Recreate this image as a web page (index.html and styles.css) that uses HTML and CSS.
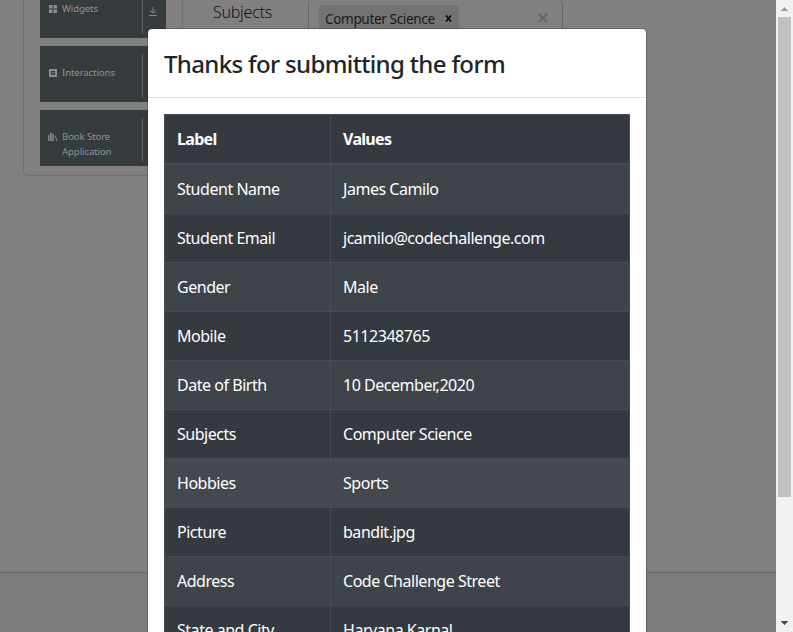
FILE: index.html
```html
<!DOCTYPE html>
<html lang="en">
<head>
<meta charset="utf-8">
<title>Student form</title>
<link rel="stylesheet" href="styles.css">
</head>
<body>
<div class="window">
  <div class="page">
    <div class="content">
      <aside class="sidebar">
        <div class="group">
          <svg class="icon" viewBox="0 0 8 8"><path d="M0 0h3.5v3.5H0zM4.5 0H8v3.5H4.5zM0 4.5h3.5V8H0zM4.5 4.5H8V8H4.5z"/></svg>
          <span class="name">Widgets</span>
          <span class="toggle"><svg viewBox="0 0 8 9"><path d="M4 0v6M1.2 3.5 4 6.2l2.8-2.7M0 8.5h8"/></svg></span>
        </div>
        <div class="group">
          <svg class="icon" viewBox="0 0 8 8"><path fill-rule="evenodd" d="M0 0h8v8H0zM2 2v4h4V2zM3 3h2v.7H3zM3 4.4h2v.7H3z"/></svg>
          <span class="name">Interactions</span>
          <span class="toggle"></span>
        </div>
        <div class="group">
          <svg class="icon book" viewBox="0 0 10 8"><path d="M0 2h1.6v6H0zM2 0h2v8H2zM4.3 1h1.7v7H4.3zM6.5 3l1-.4L9.6 7.6l-1 .4z"/></svg>
          <span class="name">Book Store<br>Application</span>
          <span class="toggle"></span>
        </div>
      </aside>
      <main class="form">
        <span class="label">Subjects</span>
        <div class="select">
          <div class="chip"><span>Computer Science</span><svg viewBox="0 0 7 7"><path d="m1 .5 5 6M6 .5l-5 6"/></svg></div>
          <svg class="clear" viewBox="0 0 10 10"><path d="m1 1 8 8M9 1 1 9"/></svg>
        </div>
      </main>
    </div>
    <footer class="footer"></footer>
  </div>
  <div class="scrollbar">
    <svg class="up" viewBox="0 0 7 4"><path d="M3 0h1v1h1v1h1v1h1v1H0V3h1V2h1V1h1z"/></svg>
    <div class="thumb"></div>
    <svg class="down" viewBox="0 0 7 4"><path d="M0 0h7v1H6v1H5v1H4v1H3V3H2V2H1V1H0z"/></svg>
  </div>
  <section class="modal">
    <header class="head"><h1>Thanks for submitting the form</h1></header>
    <div class="body">
      <table>
        <thead><tr><th>Label</th><th>Values</th></tr></thead>
        <tbody>
          <tr><td>Student Name</td><td>James Camilo</td></tr>
          <tr><td>Student Email</td><td>jcamilo@codechallenge.com</td></tr>
          <tr><td>Gender</td><td>Male</td></tr>
          <tr><td>Mobile</td><td>5112348765</td></tr>
          <tr><td>Date of Birth</td><td>10 December,2020</td></tr>
          <tr><td>Subjects</td><td>Computer Science</td></tr>
          <tr class="hover"><td>Hobbies</td><td>Sports</td></tr>
          <tr><td>Picture</td><td>bandit.jpg</td></tr>
          <tr><td>Address</td><td>Code Challenge Street</td></tr>
          <tr><td>State and City</td><td>Haryana Karnal</td></tr>
        </tbody>
      </table>
    </div>
  </section>
</div>
</body>
</html>
```
FILE: styles.css
```css
* { box-sizing: border-box; }
body { margin: 0; font-family: "Noto Sans", "Open Sans", sans-serif; }
.window { position: relative; display: flex; width: 793px; height: 632px; overflow: hidden; }
.page { flex: 1; min-width: 0; display: flex; flex-direction: column; background: #808080; }
.content { flex: 1; display: flex; align-items: flex-start; padding-left: 23px; }
.sidebar {
  width: 159px; height: 176px; padding: 0 0 0 16px; flex: none;
  display: flex; flex-direction: column; gap: 8px;
  border: 1px solid #707070; border-width: 0 0 1px 1px; border-radius: 0 0 0 5px;
}
.group {
  display: flex; width: 126px; height: 56px; flex: none; padding: 8px 0 4px 9px;
  background: #363b3e; color: #8f9293; font-size: 9.6px; line-height: 15px; letter-spacing: -0.1px;
}
.group:first-child { height: 38px; padding-top: 0; }
.icon { width: 8px; height: 8px; margin: 15px 5px 0 0; fill: #8c8e8f; flex: none; }
.group:first-child .icon { margin-top: 5px; }
.icon.book { width: 10px; margin: 15px 4px 0 -1px; fill: #7b7f81; }
.name { width: 80px; padding-top: 11px; white-space: nowrap; }
.group:first-child .name { padding-top: 1px; }
.toggle { flex: 1; border-left: 1px solid #616568; padding: 7px 0 0 6px; }
.toggle svg { display: block; width: 8px; height: 9px; fill: none; stroke: #85888a; }
.form { display: flex; flex: none; height: 60px; width: 400px; border-left: 1px solid #707070; }
.label { width: 125px; padding-left: 30px; font-size: 16px; line-height: 24px; letter-spacing: -0.25px; color: #111315; font-weight: 300; }
.select {
  display: flex; justify-content: space-between; width: 255px; height: 38px; padding: 5px 14px 0 10px;
  border: 1px solid #666; border-width: 0 1px 0 1px; border-radius: 4px 4px 0 0;
}
.chip {
  display: flex; align-items: center; width: 140px; height: 27px; padding: 0 7px 0 6px;
  justify-content: space-between; background: #737373; color: #191919; border-radius: 2px;
  font-size: 13.6px; letter-spacing: -0.38px; white-space: nowrap;
}
.chip svg { width: 7px; height: 7px; stroke: #0b0d0f; stroke-width: 1.8; fill: none; }
.clear { width: 10px; height: 10px; margin-top: 8px; stroke: #666; stroke-width: 2.2; fill: none; }
.footer { height: 60px; background: #7b7b7b; border-top: 1px solid #686868; }
.scrollbar { flex: none; width: 17px; background: #f1f1f1; display: flex; flex-direction: column; align-items: center; }
.up, .down { flex: none; width: 7px; height: 4px; shape-rendering: crispEdges; }
.up { margin: 7px 0 6px; fill: #a3a3a3; }
.down { margin: auto 0 7px; fill: #505050; }
.thumb { width: 13px; height: 480px; background: #c1c1c1; }
.modal {
  position: absolute; left: 147px; top: 28px; width: 500px; height: 640px;
  background: #fff; background-clip: padding-box; border: 1px solid rgba(0,0,0,.2); border-radius: 5px;
}
.head { height: 69px; padding: 15px 16px; border-bottom: 1px solid #dee2e6; }
h1 { margin: 0; font-size: 24px; line-height: 40px; font-weight: 500; letter-spacing: -0.65px; color: #212529; white-space: nowrap; }
.body { padding: 16px; }
table { width: 466px; border-collapse: collapse; table-layout: fixed; background: #343a40; color: #fff; font-size: 16px; line-height: 24px; letter-spacing: -0.47px; }
th, td { padding: 12px; border: 1px solid #454d55; text-align: left; white-space: nowrap; }
th:first-child { width: 166px; }
th { border-bottom-width: 2px; font-weight: 700; letter-spacing: -0.7px; }
tbody tr:nth-child(odd) { background: #3e444a; }
tbody tr.hover { background: #44494f; }
```
